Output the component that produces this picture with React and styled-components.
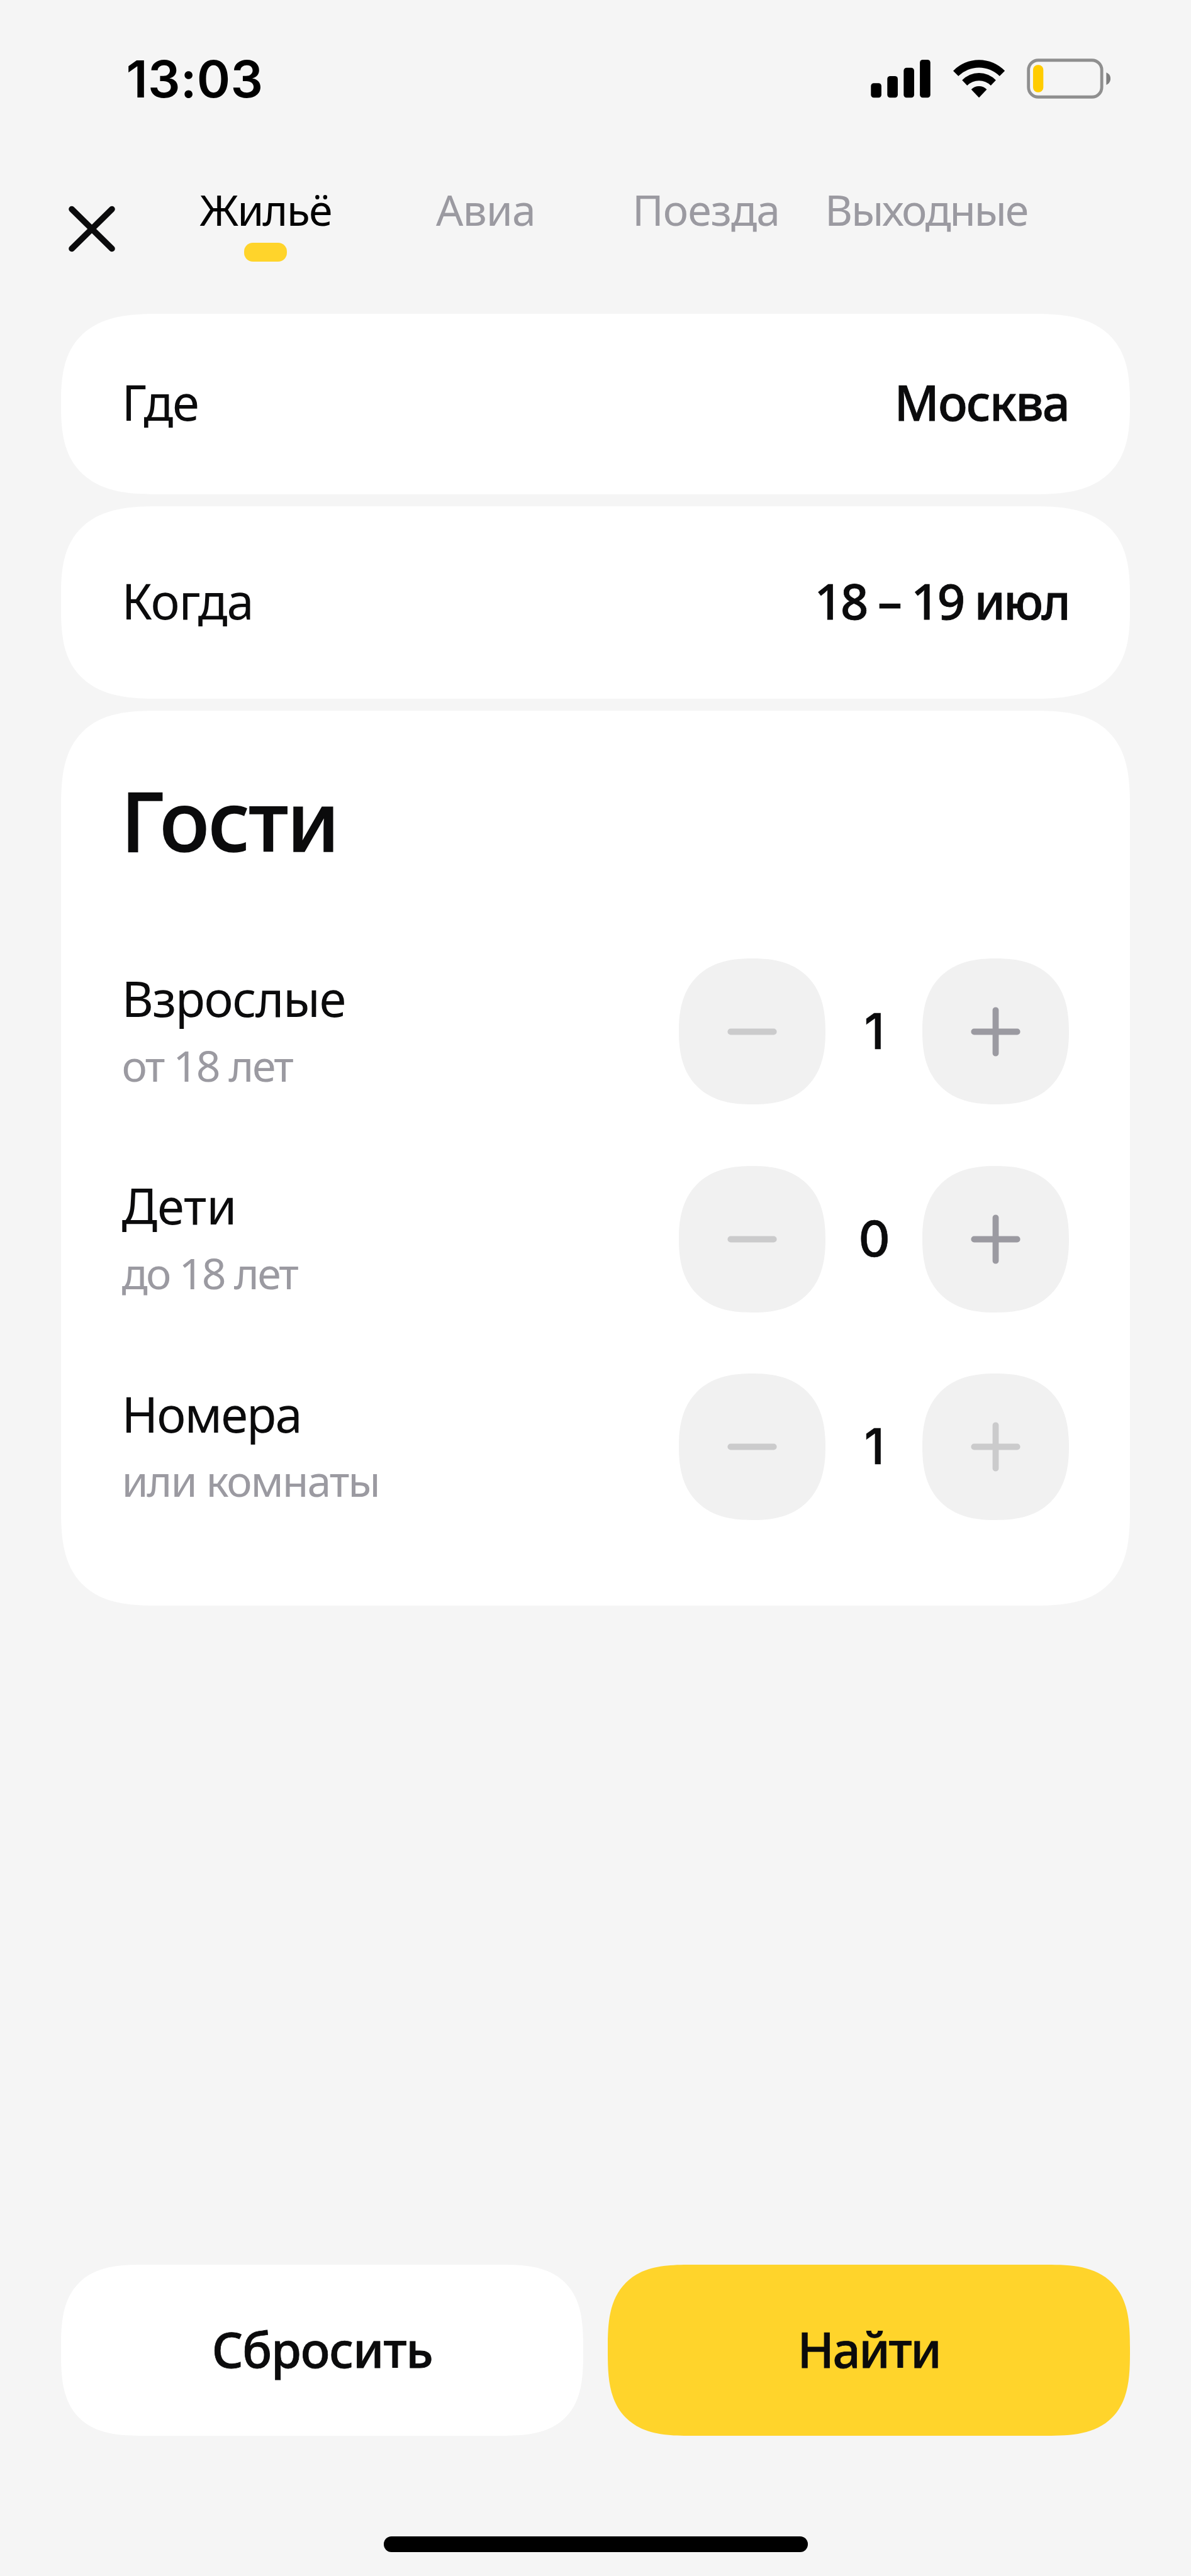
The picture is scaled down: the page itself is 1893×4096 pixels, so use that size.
import React, { useState } from 'react';
import styled, { createGlobalStyle } from 'styled-components';

const colors = {
  page: '#f5f5f5',
  card: '#ffffff',
  text: '#0b0b0c',
  muted: '#9b9aa1',
  disabled: '#cbcbcc',
  control: '#f1f1f1',
  accent: '#ffd42b',
};

const textFont = '"Noto Sans", "Open Sans", sans-serif';
const systemFont = 'Inter, Roboto, sans-serif';

const GlobalStyle = createGlobalStyle`
  *, *::before, *::after { box-sizing: border-box; }
  body { margin: 0; background: ${colors.page}; }
  button { border: 0; margin: 0; padding: 0; background: none; font: inherit; color: inherit; }
`;

const Screen = styled.main`
  display: flex;
  flex-direction: column;
  width: 1893px;
  height: 4096px;
  overflow: hidden;
  background: ${colors.page};
  color: ${colors.text};
  font-family: ${textFont};
  font-size: 77.7px;
  white-space: nowrap;
`;

const StatusBar = styled.header`
  display: flex;
  align-items: center;
  justify-content: space-between;
  height: 108px;
  margin-top: 72px;
  padding: 0 127.9px 0 200.4px;
`;

const Clock = styled.time`
  font-family: ${systemFont};
  font-size: 81px;
  font-weight: 600;
  letter-spacing: 0.25px;
  line-height: 108px;
  color: #000;
`;

const StatusIcons = styled.div`
  display: flex;
  gap: 35.4px;
  margin-bottom: 1.6px;

  svg { display: block; height: 66px; }
`;

const NavBar = styled.nav`
  display: flex;
  align-items: flex-start;
  gap: 53px;
  height: 206.4px;
  margin-top: 112.6px;
  padding-left: 97px;
`;

const CloseButton = styled.button`
  display: grid;
  place-items: center;
  width: 97px;
  height: 97px;
  margin-top: 22.7px;
`;

const Tabs = styled.div`
  display: grid;
  grid-template-columns: repeat(4, 350px);
`;

const Tab = styled.button`
  display: flex;
  flex-direction: column;
  align-items: center;
  gap: 13.7px;
  font-size: 68px;
  line-height: 80px;
  letter-spacing: ${(p) => p.$tracking}px;
  color: ${(p) => (p.$active ? '#000' : colors.muted)};
`;

const TabMarker = styled.span`
  width: 67.6px;
  height: 29.5px;
  border-radius: 14px;
  background: ${colors.accent};
`;

const Cards = styled.section`
  display: flex;
  flex-direction: column;
  gap: 19.3px;
  padding: 0 97.2px;
`;

const Card = styled.div`
  padding: 0 96.8px 0 96.2px;
  background: ${colors.card};
  border-radius: 155px;
  corner-shape: superellipse(1.49);
`;

const FieldCard = styled(Card)`
  display: flex;
  align-items: center;
  justify-content: space-between;
  height: ${(p) => p.$height}px;
  padding-bottom: 5px;
  border-radius: 155px / 143px;
  corner-shape: superellipse(1.45);
`;

const GuestsCard = styled(Card)`
  height: 1422.5px;
  padding-top: 92.3px;
`;

const Label = styled.span`
  line-height: 105.5px;
  letter-spacing: ${(p) => p.$tracking || 0}px;
`;

const Value = styled(Label)`
  font-weight: 500;
  -webkit-text-stroke: 0.8px currentColor;
`;

const Hint = styled(Label)`
  font-size: 68px;
  color: ${colors.muted};
`;

const Title = styled.h1`
  margin: 0 0 141px -1.5px;
  font-size: 131.5px;
  font-weight: 500;
  line-height: 160px;
  letter-spacing: -1.9px;
  -webkit-text-stroke: 1.6px currentColor;
`;

const GuestRows = styled.div`
  display: flex;
  flex-direction: column;
  gap: 97.3px;
`;

const GuestRow = styled.div`
  display: flex;
  align-items: center;
  justify-content: space-between;
  height: 232.8px;
`;

const GuestText = styled.div`
  display: flex;
  flex-direction: column;
  padding-top: 1.6px;
`;

const Stepper = styled.div`
  display: grid;
  grid-template-columns: 232.8px 154.7px 232.8px;
  align-items: center;
`;

const StepButton = styled.button`
  display: grid;
  place-items: center;
  height: 232.8px;
  border-radius: 50%;
  corner-shape: superellipse(1.28);
  background: ${colors.control};
  color: ${(p) => (p.disabled ? colors.disabled : colors.muted)};
`;

const Count = styled.output`
  padding-left: 1.5px;
  font-family: ${systemFont};
  font-weight: 500;
  font-size: 78px;
  line-height: 100px;
  text-align: center;
  -webkit-text-stroke: 0.6px currentColor;
`;

const Actions = styled.footer`
  display: grid;
  grid-template-columns: 1fr 1fr;
  gap: 39px;
  margin-top: 1047.8px;
  padding: 0 97.2px;
`;

const ActionButton = styled.button`
  height: 272.7px;
  padding-bottom: 5px;
  border-radius: 132px;
  corner-shape: superellipse(1.5);
  background: ${(p) => (p.$primary ? colors.accent : colors.card)};
  font-weight: 500;
  letter-spacing: ${(p) => p.$tracking}px;
  -webkit-text-stroke: 0.8px currentColor;
`;

const HomeIndicator = styled.div`
  align-self: center;
  width: 674px;
  height: 24.5px;
  margin-top: 159.7px;
  border-radius: 12.2px;
  background: #000;
`;

const SignalIcon = () => (
  <svg width="95" viewBox="0 44 354 246">
    <rect x="1" y="194" width="62" height="86" rx="17" />
    <rect x="98" y="152" width="62" height="128" rx="17" />
    <rect x="195" y="103" width="62" height="177" rx="17" />
    <rect x="291" y="55" width="62" height="225" rx="17" />
  </svg>
);

const WifiIcon = () => (
  <svg width="82.1" viewBox="486 44 306 246">
    <path d="M486 121A212 212 0 0 1 792 121L761 152A173 173 0 0 0 517 152Z" />
    <path d="M539 176A138 138 0 0 1 739 176L709 208A99 99 0 0 0 569 208Z" />
    <path d="M593 231A64 64 0 0 1 685 231L639 280Z" />
  </svg>
);

const BatteryIcon = () => (
  <svg width="133.1" viewBox="924 44 496 246">
    <rect x="934" y="58" width="434" height="218" rx="58" fill="none" stroke="#8f8f8f" strokeWidth="18" />
    <rect x="961" y="86" width="61" height="162" rx="29" fill="#ffcc00" />
    <path d="M1395 131Q1420 142 1420 167Q1420 193 1395 204Z" fill="#7f7f7f" />
  </svg>
);

const CloseIcon = () => (
  <svg width="76" height="76" viewBox="0 0 76 76" stroke={colors.text} strokeWidth="9.6" strokeLinecap="round">
    <path d="M6 6.5L70 69.5M70 6.5L6 69.5" />
  </svg>
);

const StepIcon = ({ plus }) => (
  <svg width="79" height="79" viewBox="0 0 79 79" stroke="currentColor" strokeWidth="9.8" strokeLinecap="round">
    <path d={plus ? 'M5.3 39.5H73.7M39.5 5.3V73.7' : 'M5.3 39.5H73.7'} />
  </svg>
);

const tabs = [
  { name: 'Жильё', tracking: -1.8 },
  { name: 'Авиа', tracking: -1 },
  { name: 'Поезда', tracking: -1 },
  { name: 'Выходные', tracking: -2.4 },
];

const guestRows = [
  { id: 'adults', label: 'Взрослые', tracking: -1.5, hint: 'от 18 лет', hintTracking: -2.4, min: 1, max: 6 },
  { id: 'children', label: 'Дети', tracking: 0, hint: 'до 18 лет', hintTracking: -2.7, min: 0, max: 4 },
  { id: 'rooms', label: 'Номера', tracking: -1.9, hint: 'или комнаты', hintTracking: -2, min: 1, max: 1 },
];

const initialCounts = { adults: 1, children: 0, rooms: 1 };

export default function App() {
  const [active, setActive] = useState('Жильё');
  const [counts, setCounts] = useState(initialCounts);
  const change = (id, delta) => setCounts((c) => ({ ...c, [id]: c[id] + delta }));

  return (
    <Screen>
      <GlobalStyle />
      <StatusBar>
        <Clock>13:03</Clock>
        <StatusIcons>
          <SignalIcon />
          <WifiIcon />
          <BatteryIcon />
        </StatusIcons>
      </StatusBar>

      <NavBar>
        <CloseButton>
          <CloseIcon />
        </CloseButton>
        <Tabs>
          {tabs.map((t) => (
            <Tab key={t.name} $active={t.name === active} $tracking={t.tracking} onClick={() => setActive(t.name)}>
              {t.name}
              {t.name === active && <TabMarker />}
            </Tab>
          ))}
        </Tabs>
      </NavBar>

      <Cards>
        <FieldCard $height={286.9}>
          <Label $tracking={-1.5}>Где</Label>
          <Value $tracking={-1.9}>Москва</Value>
        </FieldCard>
        <FieldCard $height={305.9}>
          <Label $tracking={-1}>Когда</Label>
          <Value $tracking={-2.9}>18 – 19 июл</Value>
        </FieldCard>
        <GuestsCard>
          <Title>Гости</Title>
          <GuestRows>
            {guestRows.map((g) => (
              <GuestRow key={g.id}>
                <GuestText>
                  <Label $tracking={g.tracking}>{g.label}</Label>
                  <Hint $tracking={g.hintTracking}>{g.hint}</Hint>
                </GuestText>
                <Stepper>
                  <StepButton disabled={counts[g.id] <= g.min} onClick={() => change(g.id, -1)}>
                    <StepIcon />
                  </StepButton>
                  <Count>{counts[g.id]}</Count>
                  <StepButton disabled={counts[g.id] >= g.max} onClick={() => change(g.id, 1)}>
                    <StepIcon plus />
                  </StepButton>
                </Stepper>
              </GuestRow>
            ))}
          </GuestRows>
        </GuestsCard>
      </Cards>

      <Actions>
        <ActionButton $tracking={-1.2} onClick={() => setCounts(initialCounts)}>Сбросить</ActionButton>
        <ActionButton $primary $tracking={-2.3}>Найти</ActionButton>
      </Actions>
      <HomeIndicator />
    </Screen>
  );
}
